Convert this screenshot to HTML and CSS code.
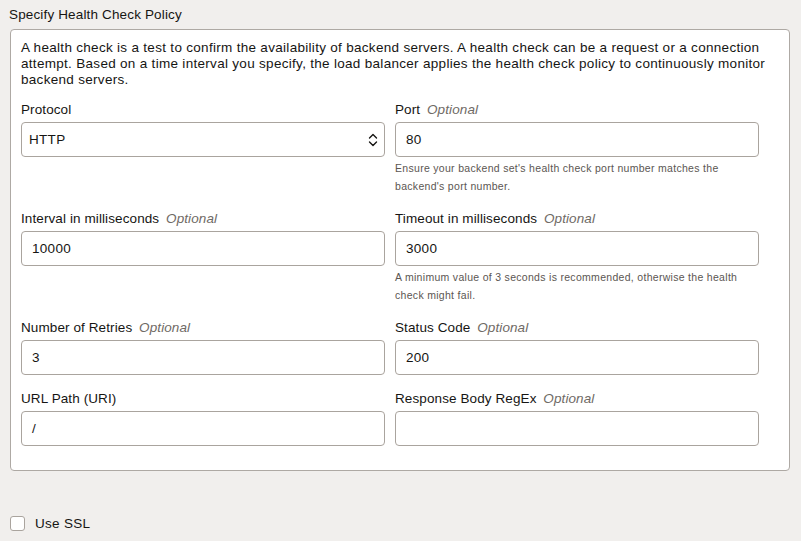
FILE: index.html
```html
<!DOCTYPE html>
<html>
<head>
<meta charset="utf-8">
<link rel="stylesheet" href="styles.css">
</head>
<body>
<div class="page">
  <div class="section-title">Specify Health Check Policy</div>
  <div class="panel">
    <p class="desc">A health check is a test to confirm the availability of backend servers. A health check can be a request or a connection attempt. Based on a time interval you specify, the load balancer applies the health check policy to continuously monitor backend servers.</p>
    <div class="grid">
      <div class="field">
        <div class="label">Protocol</div>
        <div class="input select"><span>HTTP</span>
          <svg class="chev" width="10" height="14" viewBox="0 0 10 14"><path d="M1.5 5 L5 1.5 L8.5 5 M1.5 9 L5 12.5 L8.5 9" fill="none" stroke="#161513" stroke-width="1.4" stroke-linecap="round" stroke-linejoin="round"/></svg>
        </div>
      </div>
      <div class="field">
        <div class="label">Port <i class="opt">Optional</i></div>
        <div class="input">80</div>
        <div class="help">Ensure your backend set's health check port number matches the backend's port number.</div>
      </div>
      <div class="field">
        <div class="label">Interval in milliseconds <i class="opt">Optional</i></div>
        <div class="input">10000</div>
      </div>
      <div class="field">
        <div class="label">Timeout in milliseconds <i class="opt">Optional</i></div>
        <div class="input">3000</div>
        <div class="help">A minimum value of 3 seconds is recommended, otherwise the health check might fail.</div>
      </div>
      <div class="field">
        <div class="label">Number of Retries <i class="opt">Optional</i></div>
        <div class="input">3</div>
      </div>
      <div class="field">
        <div class="label">Status Code <i class="opt">Optional</i></div>
        <div class="input">200</div>
      </div>
      <div class="field">
        <div class="label">URL Path (URI)</div>
        <div class="input">/</div>
      </div>
      <div class="field">
        <div class="label">Response Body RegEx <i class="opt">Optional</i></div>
        <div class="input"></div>
      </div>
    </div>
  </div>
  <label class="check"><span class="box"></span>Use SSL</label>
</div>
</body>
</html>
```

FILE: styles.css
```css
html, body {
  margin: 0;
  padding: 0;
  background: #f1efed;
}
body {
  font-family: "Liberation Sans", Arial, sans-serif;
  font-size: 13.5px;
  letter-spacing: 0.3px;
  color: #161513;
}
.page {
  width: 801px;
  height: 541px;
  padding: 7px 0 0 10px;
  box-sizing: border-box;
}
.section-title {
  line-height: 16px;
  margin-left: -1px;
  margin-bottom: 6px;
  letter-spacing: 0.15px;
}
.panel {
  width: 780px;
  box-sizing: border-box;
  background: #fff;
  border: 1px solid #aea9a4;
  border-radius: 4px;
  padding: 10px 10px 24px 10px;
}
.desc {
  margin: 0 0 14px 0;
  line-height: 16px;
}
.grid {
  display: grid;
  grid-template-columns: 364px 364px;
  column-gap: 10px;
  row-gap: 16px;
  align-items: start;
}
.field {
  display: flex;
  flex-direction: column;
}
.label {
  line-height: 16px;
  margin-bottom: 4px;
  letter-spacing: 0.1px;
}
.opt {
  color: #6f6a65;
  margin-left: 3px;
}
.input {
  height: 35px;
  box-sizing: border-box;
  border: 1px solid #aaa49e;
  border-radius: 4px;
  padding: 0 10px;
  display: flex;
  align-items: center;
  background: #fff;
}
.select {
  justify-content: space-between;
  padding-left: 7px;
  padding-right: 6px;
}
.chev {
  display: block;
}
.help {
  font-size: 10.5px;
  letter-spacing: 0.3px;
  line-height: 17.5px;
  color: #5b5652;
  margin-top: 3px;
}
.check {
  display: flex;
  align-items: center;
  margin-top: 45px;
}
.box {
  width: 15px;
  height: 15px;
  box-sizing: border-box;
  border: 1px solid #aaa49e;
  border-radius: 3px;
  background: #fff;
  margin-right: 10px;
}
```
